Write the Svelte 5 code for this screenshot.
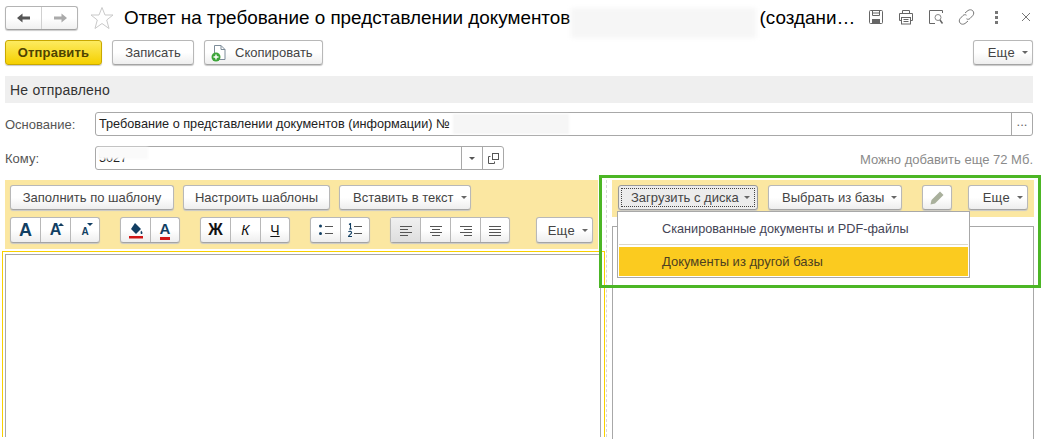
<script lang="ts">
  const fontButtons = [
    { size: 'lg', mark: '' },
    { size: 'md', mark: 'up' },
    { size: 'sm', mark: 'down' }
  ];
  const alignRows = [
    [[0, 12], [0, 8], [0, 12], [0, 8]],
    [[0, 12], [2, 10], [0, 12], [2, 10]],
    [[0, 12], [4, 12], [0, 12], [4, 12]],
    [[0, 12], [0, 12], [0, 12], [0, 12]]
  ];
</script>

<div class="page">
  <header class="head">
    <div class="nav">
      <button class="nav__btn" aria-label="Назад">
        <svg width="16" height="12" viewBox="0 0 16 12"><path d="M1 6 6.500 1.500V4.500H14V7.500H6.500V10.500Z" fill="#555"/></svg>
      </button>
      <button class="nav__btn" aria-label="Вперед">
        <svg width="16" height="12" viewBox="0 0 16 12"><path d="M15 6 9.500 1.500V4.500H2V7.500H9.500V10.500Z" fill="#aaa"/></svg>
      </button>
    </div>
    <svg class="star" width="24" height="24" viewBox="0 0 24 24"><path d="M12 1.500 15 9H23L16.700 14 19 22.500 12 17.500 5 22.500 7.300 14 1 9H9Z" fill="none" stroke="#c9c9c9"/></svg>
    <h1 class="title">Ответ на требование о представлении документов <span class="title__gap"></span>(создани…</h1>
    <div class="tools">
      <svg width="16" height="16" viewBox="0 0 16 16" fill="none" stroke="#666"><rect x="1.500" y="1.500" width="13" height="13" rx="1"/><path d="M4.500 1.500V6.500H11.500V1.500M4.500 4H11.500"/><rect x="4" y="10" width="8" height="4.500" fill="#666" stroke="none"/></svg>
      <svg width="16" height="16" viewBox="0 0 16 16" fill="none" stroke="#666"><path d="M4.500 4.500V1.500H11.500V4.500M3.500 11.500H1.500V4.500H14.500V11.500H12.500"/><rect x="3.500" y="8.500" width="9" height="6.500"/><path d="M5.500 10.500H10.500M5.500 12.500H10.500"/></svg>
      <svg width="16" height="16" viewBox="0 0 16 16" fill="none" stroke="#666"><path d="M14.500 4V1.500H1.500V14.500H7"/><circle cx="10" cy="8.500" r="3" stroke="#888"/><path d="M12 11 14.500 14.500" stroke-width="1.500"/></svg>
      <svg width="17" height="16" viewBox="0 0 17 16" fill="none" stroke="#777"><path d="M7 4 10 1.500C11.500.5 13.500.500 14.800 1.800 16 3 16 5 15 6.300L12 9.500C11 10.500 9.500 10.500 8.500 9.800"/><path d="M10 12 7 14.500C5.500 15.500 3.500 15.500 2.200 14.200 1 13 1 11 2 9.700L5 6.500C6 5.500 7.500 5.500 8.500 6.200"/></svg>
      <span class="tools__more"><i></i><i></i><i></i></span>
      <svg width="10" height="10" viewBox="0 0 10 10" stroke="#777"><path d="M1 1 9 9M9 1 1 9"/></svg>
    </div>
  </header>

  <div class="actions">
    <button class="btn btn--primary">Отправить</button>
    <button class="btn btn--save">Записать</button>
    <button class="btn btn--copy">
      <svg width="16" height="18" viewBox="0 0 16 18">
        <path d="M3.500 1.500H10L14 5.500V15.500H3.500Z" fill="#fff" stroke="#7d8c99"/>
        <path d="M10 1.500V5.500H14" fill="none" stroke="#7d8c99"/>
        <circle cx="5" cy="13" r="4.500" fill="#3da53a"/>
        <path d="M5 10.500V15.500M2.500 13H7.500" stroke="#fff" stroke-width="1.400"/>
      </svg>
      Скопировать
    </button>
    <button class="btn btn--more btn--right">Еще<span class="caret"></span></button>
  </div>

  <div class="status">Не отправлено</div>

  <div class="field">
    <span class="field__label">Основание:</span>
    <div class="input input--wide">
      <span class="input__text">Требование о представлении документов (информации) №<span class="blur blur--base"></span></span>
      <span class="input__cell input__cell--dots">...</span>
    </div>
  </div>

  <div class="field field--to">
    <span class="field__label">Кому:</span>
    <div class="input input--to">
      <span class="input__text">5027<span class="blur blur--to"></span></span>
      <span class="input__cell"><span class="caret caret--dark"></span></span>
      <span class="input__cell">
        <svg width="11" height="11" viewBox="0 0 11 11" fill="none" stroke="#555"><rect x="4.500" y=".5" width="6" height="6"/><path d="M2.500 3.500H.5V10.500H6.500V8.500"/></svg>
      </span>
    </div>
    <span class="field__hint">Можно добавить еще 72 Мб.</span>
  </div>

  <div class="panes">
    <section class="left">
      <div class="left__bar">
        <div class="bar-row">
          <button class="btn btn--fill">Заполнить по шаблону</button>
          <button class="btn btn--tune">Настроить шаблоны</button>
          <button class="btn btn--insert">Вставить в текст<span class="caret caret--wide"></span></button>
        </div>
        <div class="bar-row bar-row--icons">
          <div class="group">
            {#each fontButtons as b}
              <button class="seg" aria-label="Размер шрифта">
                <span class="font-a font-a--{b.size}">A</span>
                {#if b.mark}<span class="font-mark font-mark--{b.mark}"></span>{/if}
              </button>
            {/each}
          </div>
          <div class="group">
            <button class="seg" aria-label="Цвет фона">
              <svg width="16" height="17" viewBox="0 0 16 17"><path d="M7 1 13 7 8 12 3 7Z" fill="#123f63"/><path d="M13 8.500C14.500 10 15 11 14 12 13 12.500 12 11.500 13 8.500Z" fill="#123f63"/><rect x="1" y="14" width="14" height="2.500" fill="#d01616"/></svg>
            </button>
            <button class="seg" aria-label="Цвет текста">
              <span class="font-a font-a--color">A</span>
            </button>
          </div>
          <div class="group">
            <button class="seg seg--b">Ж</button>
            <button class="seg seg--i">К</button>
            <button class="seg seg--u">Ч</button>
          </div>
          <div class="group">
            <button class="seg" aria-label="Маркированный список">
              <svg width="14" height="12" viewBox="0 0 14 12"><circle cx="1.500" cy="2" r="1.500" fill="#123f63"/><circle cx="1.500" cy="9.500" r="1.500" fill="#123f63"/><path d="M6 2.500H14M6 9.500H14" stroke="#555"/></svg>
            </button>
            <button class="seg" aria-label="Нумерованный список">
              <svg width="14" height="14" viewBox="0 0 14 14"><path d="M1 1.500 2.500.5V6M1 6H4M.5 9C1 8 4 8 3.500 10 3 11 1 12 .5 13.500H4" fill="none" stroke="#123f63" stroke-width="1.100"/><path d="M6 3.500H14M6 10.500H14" stroke="#555"/></svg>
            </button>
          </div>
          <div class="group">
            {#each alignRows as rows, i}
              <button class="seg" class:seg--on={i === 0} aria-label="Выравнивание">
                <svg width="12" height="11" viewBox="0 0 12 11">
                  {#each rows as r, y}
                    <path d="M{r[0]} {y * 3 + 1}.5H{r[1]}" stroke="#555"/>
                  {/each}
                </svg>
              </button>
            {/each}
          </div>
          <button class="btn btn--more btn--tall">Еще<span class="caret"></span></button>
        </div>
      </div>
      <div class="focus"><div class="editor"></div></div>
    </section>

    <section class="right">
      <div class="right__bar">
        <button class="btn btn--upload"><span class="dotted">Загрузить с диска<span class="caret"></span></span></button>
        <button class="btn btn--pick">Выбрать из базы<span class="caret caret--wide"></span></button>
        <button class="btn btn--pencil" aria-label="Редактировать">
          <svg width="16" height="16" viewBox="0 0 16 16"><path d="M11 1.500 14.500 5 6 13.500 1.500 14.500 2.500 10Z" fill="#a9b09c"/></svg>
        </button>
        <button class="btn btn--more btn--right2">Еще<span class="caret"></span></button>
      </div>
      <div class="attachments"></div>
      <div class="menu">
        <div class="menu__item menu__item--first">Сканированные документы и PDF-файлы</div>
        <div class="menu__sep"></div>
        <div class="menu__item menu__item--active">Документы из другой базы</div>
      </div>
    </section>
  </div>

  <div class="callout"></div>
  <span class="blur blur--title"></span>
</div>

<style>
  :global(body) {
    margin: 0;
    background: #fff;
  }

  .page {
    position: relative;
    display: flex;
    flex-direction: column;
    width: 1042px;
    height: 437px;
    padding-bottom: 2px;
    overflow: hidden;
    color: #333;
    font-family: "Liberation Sans", Arial, sans-serif;
    font-size: 13px;
  }

  button {
    padding: 0;
    font-family: inherit;
    font-size: 13px;
    color: #444;
    cursor: default;
  }

  .head {
    display: flex;
    align-items: center;
    height: 24px;
    margin: 6px 0 10px 5px;
  }

  .nav {
    display: flex;
    width: 73px;
    height: 24px;
    box-sizing: border-box;
    border: 1px solid #b4b4b4;
    border-bottom-color: #a0a0a0;
    border-radius: 3px;
    background: linear-gradient(#fff 50%, #f0f0f0);
    box-shadow: 0 1px 1px #ccc;
  }

  .nav__btn {
    display: flex;
    flex: 1;
    align-items: center;
    justify-content: center;
    border: 0;
    background: none;
  }

  .nav__btn + .nav__btn {
    border-left: 1px solid #d0d0d0;
  }

  .star {
    margin-left: 12px;
  }

  .title {
    margin: 0 0 0 10px;
    color: #000;
    font-size: 18.870px;
    font-weight: 400;
    white-space: nowrap;
  }

  .title__gap {
    display: inline-block;
    width: 184px;
  }

  .tools {
    position: absolute;
    top: 9px;
    right: 11px;
    display: flex;
    align-items: center;
    gap: 14px;
  }

  .tools__more {
    display: flex;
    flex-direction: column;
    gap: 2px;
    margin: 0 9px 0 6px;
  }

  .tools__more i {
    width: 3px;
    height: 3px;
    background: #777;
  }

  .btn {
    display: inline-flex;
    align-items: center;
    justify-content: center;
    height: 25px;
    box-sizing: border-box;
    border: 1px solid #b8b8b8;
    border-bottom-color: #a4a4a4;
    border-radius: 3px;
    background: linear-gradient(#fff 50%, #eee);
    box-shadow: 0 1px 1px #c8c8c8;
    white-space: nowrap;
  }

  .actions {
    display: flex;
    margin: 0 9px 11px 5px;
  }

  .btn--primary {
    width: 97px;
    border-color: #c9a800;
    background: linear-gradient(#fdeb60, #f5d000);
    color: #4e4300;
    font-weight: 700;
    letter-spacing: .2px;
  }

  .btn--save {
    width: 82px;
    margin-left: 10px;
  }

  .btn--copy {
    justify-content: flex-start;
    gap: 8px;
    width: 119px;
    margin-left: 10px;
    padding-left: 6px;
  }

  .btn--more {
    justify-content: flex-end;
    gap: 7px;
    width: 60px;
    padding-right: 4px;
    letter-spacing: .3px;
  }

  .btn--right {
    margin-left: auto;
  }

  .btn--tall {
    width: 61px;
    height: 26px;
    margin-left: 6px;
  }

  .caret {
    display: inline-block;
    width: 0;
    height: 0;
    margin-left: 5px;
    border-top: 3px solid #666;
    border-right: 3px solid transparent;
    border-left: 3px solid transparent;
    vertical-align: middle;
  }

  .caret--wide {
    margin-left: 7px;
  }

  .btn--more .caret {
    margin-left: 0;
  }

  .caret--dark {
    margin: 0;
    border-top-color: #555;
  }

  .status {
    display: flex;
    align-items: center;
    height: 27px;
    margin: 0 9px 9px 5px;
    padding-left: 5px;
    background: #efefef;
    font-size: 14px;
    letter-spacing: .2px;
  }

  .field {
    display: flex;
    align-items: center;
    height: 24px;
    margin: 0 9px 10px 5px;
  }

  .field__label {
    width: 90px;
    color: #555;
  }

  .field__hint {
    margin: 3px 0 0 auto;
    color: #8a8a8a;
  }

  .input {
    display: flex;
    align-items: stretch;
    height: 24px;
    box-sizing: border-box;
    border: 1px solid #a8a8a8;
    border-radius: 3px;
    background: #fff;
  }

  .input--wide {
    flex: 1;
  }

  .input--to {
    width: 409px;
  }

  .input__text {
    position: relative;
    display: flex;
    flex: 1;
    align-items: center;
    padding-left: 3px;
    color: #222;
    font-size: 12.700px;
    white-space: pre;
  }

  .input__cell {
    display: flex;
    align-items: center;
    justify-content: center;
    width: 20px;
    border-left: 1px solid #a8a8a8;
  }

  .input__cell--dots {
    align-items: flex-start;
    color: #666;
    line-height: 18px;
  }

  .blur {
    position: absolute;
    background: #f6f6f6;
    filter: blur(1px);
  }

  .blur--base {
    top: 1px;
    left: 357px;
    width: 116px;
    height: 20px;
  }

  .blur--to {
    top: 0;
    left: 2px;
    width: 50px;
    height: 12px;
    background: #fafafa;
  }

  .blur--title {
    top: 8px;
    left: 571px;
    width: 185px;
    height: 30px;
    filter: blur(2px);
  }

  .panes {
    display: flex;
    flex: 1;
    min-height: 0;
  }

  .left {
    display: flex;
    flex-direction: column;
    width: 604px;
    margin-left: 2px;
  }

  .left__bar {
    width: 593px;
    height: 69px;
    box-sizing: border-box;
    margin: 0 0 2px 3px;
    padding: 5px;
    background: #fbe7a1;
  }

  .bar-row {
    display: flex;
    gap: 9px;
  }

  .bar-row--icons {
    gap: 20px;
    margin-top: 7px;
  }

  .btn--fill {
    width: 164px;
  }

  .btn--tune {
    width: 147px;
  }

  .btn--insert {
    justify-content: flex-start;
    width: 132px;
    padding-left: 13px;
  }

  .group {
    display: flex;
    height: 26px;
    box-sizing: border-box;
    border: 1px solid #b8b8b8;
    border-bottom-color: #a4a4a4;
    border-radius: 3px;
    box-shadow: 0 1px 1px #c8c8c8;
    background: linear-gradient(#fff 50%, #eee);
  }

  .seg {
    position: relative;
    display: flex;
    align-items: center;
    justify-content: center;
    width: 30px;
    box-sizing: border-box;
    border: 0;
    background: none;
    color: #111;
  }

  .seg:first-child,
  .seg:last-child {
    width: 29px;
  }

  .seg + .seg {
    border-left: 1px solid #b8b8b8;
  }

  .seg--on {
    background: linear-gradient(#f0f0f0, #dedede);
  }

  .seg--b {
    font-size: 16px;
    font-weight: 700;
  }

  .seg--i {
    font-size: 14px;
    font-style: italic;
  }

  .seg--u {
    font-size: 14px;
    text-decoration: underline;
  }

  .font-a {
    color: #123f63;
    font-weight: 700;
    line-height: 1;
  }

  .font-a--lg {
    font-size: 18px;
  }

  .font-a--md {
    font-size: 16px;
  }

  .font-a--sm {
    margin-top: 4px;
    font-size: 10px;
  }

  .font-a--color {
    padding-bottom: 1px;
    border-bottom: 3px solid #d01616;
    font-size: 15px;
  }

  .font-mark {
    position: absolute;
    top: 5px;
    right: 6px;
    width: 0;
    height: 0;
    border-right: 3px solid transparent;
    border-left: 3px solid transparent;
  }

  .font-mark--up {
    border-bottom: 3px solid #123f63;
  }

  .font-mark--down {
    border-top: 3px solid #123f63;
  }

  .focus {
    flex: 1;
    width: 603px;
    box-sizing: border-box;
    padding: 2px 3px 0 2px;
    border: 1px solid #f8d000;
    border-bottom: 0;
  }

  .editor {
    height: 100%;
    box-sizing: border-box;
    border: 1px solid #a8a8a8;
    border-bottom: 0;
  }

  .right {
    position: relative;
    flex: 1;
    padding: 0 8px 0 5px;
    border-left: 1px dashed #d8d8d8;
  }

  .right__bar {
    display: flex;
    height: 37px;
    box-sizing: border-box;
    padding: 5px 6px;
    background: #fbe7a1;
  }

  .btn--upload {
    width: 140px;
    padding: 2px;
    border-color: #999;
    background: #ececec;
  }

  .dotted {
    display: flex;
    align-items: center;
    width: 100%;
    height: 100%;
    box-sizing: border-box;
    padding-left: 9px;
    border: 1px dotted #444;
  }

  .btn--pick {
    justify-content: flex-start;
    width: 134px;
    margin-left: 10px;
    padding-left: 13px;
  }

  .btn--pencil {
    width: 30px;
    margin-left: 20px;
  }

  .btn--right2 {
    margin-left: 16px;
  }

  .attachments {
    height: 100%;
    box-sizing: border-box;
    margin-top: 9px;
    border: 1px solid #a8a8a8;
    border-bottom: 0;
  }

  .menu {
    position: absolute;
    top: 31px;
    left: 10px;
    width: 353px;
    height: 67px;
    box-sizing: border-box;
    padding: 1px;
    border: 1px solid #a8a8a8;
    background: #fff;
    color: #445;
  }

  .menu__item {
    display: flex;
    align-items: center;
    height: 31px;
    padding-left: 43px;
  }

  .menu__item--first {
    font-size: 12.700px;
  }

  .menu__sep {
    height: 1px;
    margin-bottom: 2px;
    background: #dcd8c8;
  }

  .menu__item--active {
    height: 29px;
    background: #fbcb1f;
    color: #4c4020;
  }

  .callout {
    position: absolute;
    top: 175px;
    left: 599px;
    width: 442px;
    height: 113px;
    box-sizing: border-box;
    border: 3px solid #4cb625;
    pointer-events: none;
  }
</style>
